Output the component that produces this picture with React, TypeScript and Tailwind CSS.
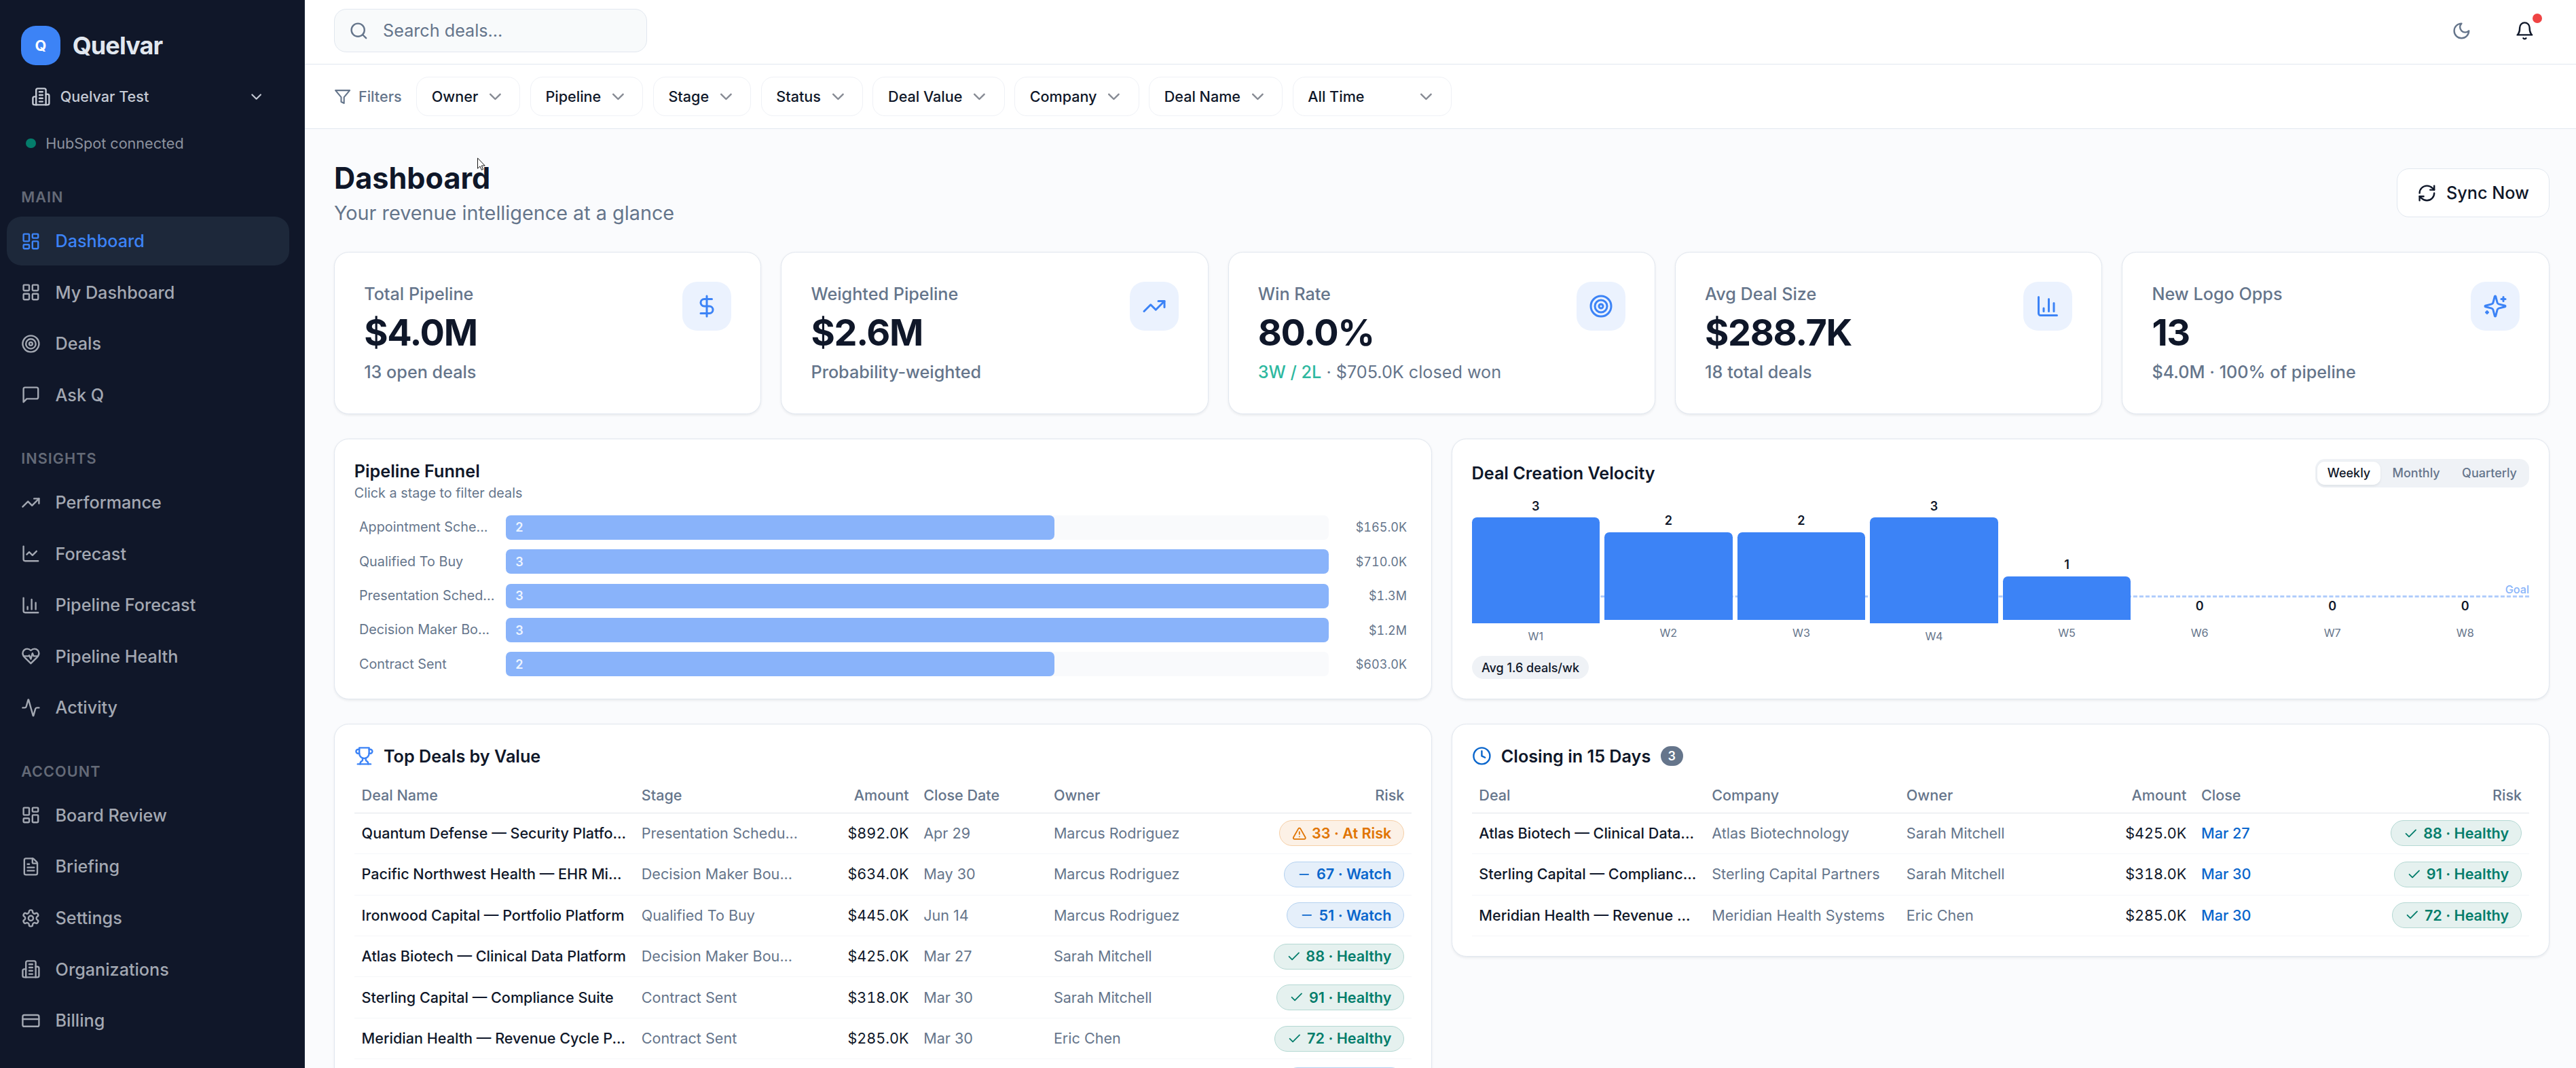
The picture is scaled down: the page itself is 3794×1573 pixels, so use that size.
import type { ReactNode } from "react";
import {
  Activity,
  ChartColumn,
  ChartLine,
  Check,
  ChevronDown,
  Clock,
  CreditCard,
  DollarSign,
  FileText,
  LayoutDashboard,
  LayoutGrid,
  Minus,
  RefreshCw,
  Search,
  Target,
  TrendingUp,
  TriangleAlert,
} from "lucide-react";

type IconProps = { size?: number; className?: string };
type IconType = (props: IconProps) => ReactNode;

function makeIcon(paths: string[]): IconType {
  return function Icon({ size = 16, className }: IconProps) {
    return (
      <svg
        width={size}
        height={size}
        viewBox="0 0 24 24"
        fill="none"
        stroke="currentColor"
        strokeWidth={2}
        strokeLinecap="round"
        strokeLinejoin="round"
        className={className}
      >
        {paths.map((d) => (
          <path key={d} d={d} />
        ))}
      </svg>
    );
  };
}

const Building = makeIcon([
  "M6 22V4a2 2 0 0 1 2-2h8a2 2 0 0 1 2 2v18Z",
  "M6 12H4a2 2 0 0 0-2 2v6a2 2 0 0 0 2 2h2",
  "M18 9h2a2 2 0 0 1 2 2v9a2 2 0 0 1-2 2h-2",
  "M10 6h4",
  "M10 10h4",
  "M10 14h4",
  "M10 18h4",
]);
const Message = makeIcon(["M21 15a2 2 0 0 1-2 2H7l-4 4V5a2 2 0 0 1 2-2h14a2 2 0 0 1 2 2z"]);
const HeartPulse = makeIcon([
  "M19 14c1.49-1.46 3-3.21 3-5.5A5.5 5.5 0 0 0 16.5 3c-1.76 0-3 .5-4.5 2-1.5-1.5-2.74-2-4.5-2A5.5 5.5 0 0 0 2 8.5c0 2.3 1.5 4.05 3 5.5l7 7Z",
  "M3.22 12H9.5l.5-1 2 4.5 2-7 1.5 3.5h5.27",
]);
const Gear = makeIcon([
  "M12.22 2h-.44a2 2 0 0 0-2 2v.18a2 2 0 0 1-1 1.73l-.43.25a2 2 0 0 1-2 0l-.15-.08a2 2 0 0 0-2.73.73l-.22.38a2 2 0 0 0 .73 2.73l.15.1a2 2 0 0 1 1 1.72v.51a2 2 0 0 1-1 1.74l-.15.09a2 2 0 0 0-.73 2.73l.22.38a2 2 0 0 0 2.73.73l.15-.08a2 2 0 0 1 2 0l.43.25a2 2 0 0 1 1 1.73V20a2 2 0 0 0 2 2h.44a2 2 0 0 0 2-2v-.18a2 2 0 0 1 1-1.73l.43-.25a2 2 0 0 1 2 0l.15.08a2 2 0 0 0 2.73-.73l.22-.39a2 2 0 0 0-.73-2.73l-.15-.08a2 2 0 0 1-1-1.74v-.5a2 2 0 0 1 1-1.74l.15-.09a2 2 0 0 0 .73-2.73l-.22-.38a2 2 0 0 0-2.73-.73l-.15.08a2 2 0 0 1-2 0l-.43-.25a2 2 0 0 1-1-1.73V4a2 2 0 0 0-2-2z",
  "M15 12a3 3 0 1 1-6 0 3 3 0 0 1 6 0Z",
]);
const Bell = makeIcon(["M6 8a6 6 0 0 1 12 0c0 7 3 9 3 9H3s3-2 3-9", "M10.3 21a1.94 1.94 0 0 0 3.4 0"]);
const Moon = makeIcon(["M12 3a6 6 0 0 0 9 9 9 9 0 1 1-9-9Z"]);
const Funnel = makeIcon(["M22 3H2l8 9.46V19l4 2v-8.54L22 3Z"]);
const Trophy = makeIcon([
  "M6 9H4.5a2.5 2.5 0 0 1 0-5H6",
  "M18 9h1.5a2.5 2.5 0 0 0 0-5H18",
  "M4 22h16",
  "M10 14.66V17c0 .55-.47.98-.97 1.21C7.85 18.75 7 20.24 7 22",
  "M14 14.66V17c0 .55.47.98.97 1.21C16.15 18.75 17 20.24 17 22",
  "M18 2H6v7a6 6 0 0 0 12 0V2Z",
]);
const Sparkles = makeIcon([
  "M9.937 15.5A2 2 0 0 0 8.5 14.063l-6.135-1.582a.5.5 0 0 1 0-.962L8.5 9.936A2 2 0 0 0 9.937 8.5l1.582-6.135a.5.5 0 0 1 .963 0L14.063 8.5A2 2 0 0 0 15.5 9.937l6.135 1.581a.5.5 0 0 1 0 .964L15.5 14.063a2 2 0 0 0-1.437 1.437l-1.582 6.135a.5.5 0 0 1-.963 0z",
  "M20 3v4",
  "M22 5h-4",
  "M4 17v2",
  "M5 18H3",
]);

const sections: { title: string; items: { icon: any; label: string; active?: boolean }[] }[] = [
  {
    title: "MAIN",
    items: [
      { icon: LayoutDashboard, label: "Dashboard", active: true },
      { icon: LayoutGrid, label: "My Dashboard" },
      { icon: Target, label: "Deals" },
      { icon: Message, label: "Ask Q" },
    ],
  },
  {
    title: "INSIGHTS",
    items: [
      { icon: TrendingUp, label: "Performance" },
      { icon: ChartLine, label: "Forecast" },
      { icon: ChartColumn, label: "Pipeline Forecast" },
      { icon: HeartPulse, label: "Pipeline Health" },
      { icon: Activity, label: "Activity" },
    ],
  },
  {
    title: "ACCOUNT",
    items: [
      { icon: LayoutDashboard, label: "Board Review" },
      { icon: FileText, label: "Briefing" },
      { icon: Gear, label: "Settings" },
      { icon: Building, label: "Organizations" },
      { icon: CreditCard, label: "Billing" },
    ],
  },
];

function Sidebar() {
  return (
    <aside className="w-[249.33px] shrink-0 overflow-hidden border-r border-[#1e293b] bg-[#101729] pt-[21.2px] pr-3 pl-[5.33px]">
      <div className="flex items-center gap-2.5 px-3">
        <div className="flex size-8 items-center justify-center rounded-xl bg-[#3c83f6] text-xs font-bold text-white">Q</div>
        <span className="text-xl font-bold tracking-tight text-[#e1e7ef]">Quelvar</span>
      </div>
      <div className="mx-3 mt-2 flex h-9 items-center gap-2 px-2 text-[#c5cad4]">
        <Building />
        <span className="flex-1 text-xs font-medium">Quelvar Test</span>
        <ChevronDown size={14} />
      </div>
      <div className="mt-3 flex h-4 items-center gap-2 px-4">
        <span className="size-2 rounded-full bg-[#047d6b]" />
        <span className="text-xs text-[#8c929e]">HubSpot connected</span>
      </div>
      <nav className="mt-7 flex flex-col gap-6">
        {sections.map((s) => (
          <div key={s.title}>
            <div className="mb-2 h-4 px-3 text-xs font-semibold tracking-wider text-[#646a77]">{s.title}</div>
            <div className="flex flex-col gap-0.5">
              {s.items.map(({ icon: Icon, label, active }) => (
                <div
                  key={label}
                  className={
                    active
                      ? "flex h-10 items-center gap-3 rounded-xl bg-[#1d283a] px-3 text-sm font-medium text-[#3c83f6]"
                      : "flex h-10 items-center gap-3 rounded-xl px-3 text-sm font-medium text-[#a3a8b2]"
                  }
                >
                  <Icon size={16} />
                  {label}
                </div>
              ))}
            </div>
          </div>
        ))}
      </nav>
    </aside>
  );
}

function Header() {
  return (
    <header className="h-[53px] border-b border-[#e1e7ef] bg-white pt-[7px] pr-[21.8px] pl-6">
      <div className="flex h-9 items-center justify-between">
        <div className="flex h-9 w-64 items-center gap-3 rounded-[10px] border border-[#e1e7ef] bg-[#f8fafb] pl-[11.5px] text-sm text-[#65758b]">
          <Search size={16} />
          <span>Search deals...</span>
        </div>
        <div className="flex items-center gap-3">
          <div className="flex size-10 items-center justify-center text-[#65758b]">
            <Moon />
          </div>
          <div className="relative flex size-10 items-center justify-center text-[#0f1729]">
            <Bell />
            <span className="absolute top-1.5 right-1.5 size-2 rounded-full bg-[#ef4343]" />
          </div>
        </div>
      </div>
    </header>
  );
}

function FilterBar() {
  return (
    <div className="flex items-center gap-2 border-b border-[#e1e7ef] bg-white py-2.5 pl-6 text-xs font-medium text-[#0f1729]">
      <div className="mr-1 flex items-center gap-1.5 text-[#65758b]">
        <Funnel size={14} />
        Filters
      </div>
      {["Owner", "Pipeline", "Stage", "Status", "Deal Value", "Company", "Deal Name"].map((f) => (
        <div key={f} className="flex h-8 items-center gap-1.5 rounded-[10px] border border-[#eff1f6] bg-white px-3">
          {f}
          <ChevronDown size={16} className="opacity-50" />
        </div>
      ))}
      <div className="flex h-8 w-[130px] items-center justify-between rounded-[10px] border border-[#eff1f6] bg-white px-3">
        All Time
        <ChevronDown size={16} className="opacity-50" />
      </div>
    </div>
  );
}

const stats: { label: string; value: string; sub: ReactNode; icon: any }[] = [
  { label: "Total Pipeline", value: "$4.0M", sub: "13 open deals", icon: DollarSign },
  { label: "Weighted Pipeline", value: "$2.6M", sub: "Probability-weighted", icon: TrendingUp },
  {
    label: "Win Rate",
    value: "80.0%",
    sub: (
      <>
        <span className="text-[#2eb8a0]">3W / 2L</span>
        <span className="font-normal"> · $705.0K closed won</span>
      </>
    ),
    icon: Target,
  },
  { label: "Avg Deal Size", value: "$288.7K", sub: "18 total deals", icon: ChartColumn },
  { label: "New Logo Opps", value: "13", sub: "$4.0M · 100% of pipeline", icon: Sparkles },
];

function StatCards() {
  return (
    <div className="grid grid-cols-5 gap-4">
      {stats.map(({ label, value, sub, icon: Icon }) => (
        <div
          key={label}
          className="flex items-start justify-between rounded-xl border border-[#e1e7ef] bg-white p-6 shadow-[0_1px_2px_rgba(15,23,42,0.07)]"
        >
          <div className="text-sm font-medium text-[#65758b]">
            <p>{label}</p>
            <p className="mt-1 text-3xl font-bold tracking-tight text-[#0f1729]">{value}</p>
            <p className="mt-1">{sub}</p>
          </div>
          <div className="flex size-10 items-center justify-center rounded-xl bg-[#ebf2fe] text-[#3c83f6]">
            <Icon size={20} />
          </div>
        </div>
      ))}
    </div>
  );
}

const stages = [
  { name: "Appointment Sche...", count: 2, amount: "$165.0K" },
  { name: "Qualified To Buy", count: 3, amount: "$710.0K" },
  { name: "Presentation Sched...", count: 3, amount: "$1.3M" },
  { name: "Decision Maker Bo...", count: 3, amount: "$1.2M" },
  { name: "Contract Sent", count: 2, amount: "$603.0K" },
];

function PipelineFunnel() {
  return (
    <div className="rounded-xl border border-[#e1e7ef] bg-white p-4 shadow-[0_1px_2px_rgba(15,23,42,0.07)]">
      <h3 className="text-sm font-semibold">Pipeline Funnel</h3>
      <p className="text-[11px] leading-4 text-[#65758b]">Click a stage to filter deals</p>
      <div className="mt-2 flex flex-col gap-1">
        {stages.map((s) => (
          <div key={s.name} className="flex h-6 items-center gap-2 px-1 text-[11px] text-[#65758b]">
            <span className="w-28 whitespace-nowrap">{s.name}</span>
            <div className="h-5 flex-1 rounded bg-[#f9fafc]">
              <div
                className="flex h-full items-center rounded bg-[#89b3fa] px-2 text-[10px] font-semibold text-white/85"
                style={{ width: `${(s.count / 3) * 100}%` }}
              >
                {s.count}
              </div>
            </div>
            <span className="w-14 text-right text-[10px] tabular-nums">{s.amount}</span>
          </div>
        ))}
      </div>
    </div>
  );
}

const weeks = [
  { label: "W1", count: 3, height: 86.4 },
  { label: "W2", count: 2, height: 71.8 },
  { label: "W3", count: 2, height: 71.8 },
  { label: "W4", count: 3, height: 86.4 },
  { label: "W5", count: 1, height: 35.7 },
  { label: "W6", count: 0, height: 2 },
  { label: "W7", count: 0, height: 2 },
  { label: "W8", count: 0, height: 2 },
];

function Velocity() {
  return (
    <div className="rounded-xl border border-[#e1e7ef] bg-white p-4 shadow-[0_1px_2px_rgba(15,23,42,0.07)]">
      <div className="flex items-center justify-between">
        <h3 className="text-sm font-semibold">Deal Creation Velocity</h3>
        <div className="flex gap-0.5 rounded-lg bg-[#eff2f6] p-0.5 text-[10px] leading-[15px] font-medium text-[#65758b]">
          <span className="rounded-md bg-white px-2 py-0.5 text-[#0f1729] shadow-[0_1px_2px_rgba(15,23,42,0.07)]">
            Weekly
          </span>
          <span className="px-2 py-0.5">Monthly</span>
          <span className="px-2 py-0.5">Quarterly</span>
        </div>
      </div>
      <div className="relative mt-2 flex h-[118px] items-end gap-1">
        <div className="absolute inset-x-0 top-[80.8px] border-t-2 border-dashed border-[#b1cdfb]">
          <span className="absolute right-0 bottom-0 text-[9px] leading-[13px] font-medium text-[#8ab5fa]">Goal</span>
        </div>
        {weeks.map((w) => (
          <div
            key={w.label}
            className={
              w.count === 3
                ? "relative -mb-[2.8px] flex flex-1 flex-col items-center"
                : "relative flex flex-1 flex-col items-center"
            }
          >
            <span className="mb-0.5 text-[10px] leading-[15px] font-semibold">{w.count}</span>
            <div
              className={w.count ? "w-full rounded-t bg-[#3c83f6]" : "w-full"}
              style={{ height: w.height }}
            />
            <span className="mt-1 text-[9px] leading-[13.5px] text-[#65758b]">{w.label}</span>
          </div>
        ))}
      </div>
      <div className="mt-3 flex">
        <span className="rounded-full bg-[#eff2f6] px-2 py-0.5 text-[10px] leading-[15px] font-medium">
          Avg 1.6 deals/wk
        </span>
      </div>
    </div>
  );
}

const riskStyles = {
  "At Risk": { icon: TriangleAlert, cls: "border-[#f6cfa6] bg-[#fcf1e6] text-[#e07400]" },
  Watch: { icon: Minus, cls: "border-[#b3d1f0] bg-[#e5effa] text-[#0a66cc]" },
  Healthy: { icon: Check, cls: "border-[#b4d8d3] bg-[#e5f1ef] text-[#047d6b]" },
};
type Risk = keyof typeof riskStyles;

function RiskBadge({ score, risk }: { score: number; risk: Risk }) {
  const { icon: Icon, cls } = riskStyles[risk];
  return (
    <span
      className={`inline-flex h-[21px] items-center gap-1 rounded-full border px-2.5 text-xs font-semibold ${cls}`}
    >
      <Icon size={12} />
      {score} · {risk}
    </span>
  );
}

const topDeals: [string, string, string, string, string, number, Risk][] = [
  ["Quantum Defense — Security Platfo...", "Presentation Schedu...", "$892.0K", "Apr 29", "Marcus Rodriguez", 33, "At Risk"],
  ["Pacific Northwest Health — EHR Mi...", "Decision Maker Bou...", "$634.0K", "May 30", "Marcus Rodriguez", 67, "Watch"],
  ["Ironwood Capital — Portfolio Platform", "Qualified To Buy", "$445.0K", "Jun 14", "Marcus Rodriguez", 51, "Watch"],
  ["Atlas Biotech — Clinical Data Platform", "Decision Maker Bou...", "$425.0K", "Mar 27", "Sarah Mitchell", 88, "Healthy"],
  ["Sterling Capital — Compliance Suite", "Contract Sent", "$318.0K", "Mar 30", "Sarah Mitchell", 91, "Healthy"],
  ["Meridian Health — Revenue Cycle P...", "Contract Sent", "$285.0K", "Mar 30", "Eric Chen", 72, "Healthy"],
];

function TopDeals() {
  return (
    <div className="h-[320px] rounded-xl border border-[#e1e7ef] bg-white p-4 shadow-[0_1px_2px_rgba(15,23,42,0.07)]">
      <h3 className="flex items-center gap-2 text-sm font-semibold">
        <Trophy className="text-[#3c83f6]" />
        Top Deals by Value
      </h3>
      <div className="mt-2 text-xs whitespace-nowrap text-[#65758b]">
        <div className="grid h-[28.6px] grid-cols-[229px_130px_100.8px_106.5px_140px_1fr] items-center border-b border-[#e1e5ea] font-medium *:px-1.5">
          <span>Deal Name</span>
          <span>Stage</span>
          <span className="text-right">Amount</span>
          <span>Close Date</span>
          <span>Owner</span>
          <span className="text-right">Risk</span>
        </div>
        {topDeals.map(([name, stage, amount, date, owner, score, risk]) => (
          <div
            key={name}
            className="grid h-[33.6px] grid-cols-[229px_130px_100.8px_106.5px_140px_1fr] items-center border-b border-[#f5f7f9]"
          >
            <span className="px-1.5 font-medium text-[#0f1729]">{name}</span>
            <span className="px-1.5">{stage}</span>
            <span className="px-1.5 text-right text-[#0f1729] tabular-nums">{amount}</span>
            <span className="px-1.5">{date}</span>
            <span className="px-1.5">{owner}</span>
            <div className="flex justify-end px-1.5">
              <RiskBadge score={score} risk={risk} />
            </div>
          </div>
        ))}
        <div className="flex h-[33.6px] items-center justify-end px-1.5">
          <span className="h-[21px] w-[98px] rounded-full border border-[#b3d1f0] bg-[#e5effa]" />
        </div>
      </div>
    </div>
  );
}

const closing: [string, string, string, string, string, number][] = [
  ["Atlas Biotech — Clinical Data...", "Atlas Biotechnology", "Sarah Mitchell", "$425.0K", "Mar 27", 88],
  ["Sterling Capital — Complianc...", "Sterling Capital Partners", "Sarah Mitchell", "$318.0K", "Mar 30", 91],
  ["Meridian Health — Revenue ...", "Meridian Health Systems", "Eric Chen", "$285.0K", "Mar 30", 72],
];

function ClosingSoon() {
  return (
    <div className="self-start rounded-xl border border-[#e1e7ef] bg-white p-4 shadow-[0_1px_2px_rgba(15,23,42,0.07)]">
      <h3 className="flex items-center gap-2 text-sm font-semibold">
        <Clock size={16} className="text-[#0a66cc]" />
        Closing in 15 Days
        <span className="flex h-4 items-center rounded-full bg-[#65758b] px-1.5 text-[10px] text-white">3</span>
      </h3>
      <div className="mt-2 text-xs whitespace-nowrap text-[#65758b]">
        <div className="grid h-[28.6px] grid-cols-[190.5px_159.2px_120px_121.2px_100px_1fr] items-center border-b border-[#e1e5ea] font-medium *:px-1.5">
          <span>Deal</span>
          <span>Company</span>
          <span>Owner</span>
          <span className="text-right">Amount</span>
          <span>Close</span>
          <span className="text-right">Risk</span>
        </div>
        {closing.map(([name, company, owner, amount, date, score]) => (
          <div
            key={name}
            className="grid h-[33.6px] grid-cols-[190.5px_159.2px_120px_121.2px_100px_1fr] items-center border-b border-[#f5f7f9]"
          >
            <span className="px-1.5 font-medium text-[#0f1729]">{name}</span>
            <span className="px-1.5">{company}</span>
            <span className="px-1.5">{owner}</span>
            <span className="px-1.5 text-right text-[#0f1729] tabular-nums">{amount}</span>
            <span className="px-1.5 font-medium text-[#0a66cc]">{date}</span>
            <div className="flex justify-end px-1.5">
              <RiskBadge score={score} risk="Healthy" />
            </div>
          </div>
        ))}
      </div>
    </div>
  );
}

export default function App() {
  return (
    <div className="relative flex h-[873.8px] overflow-hidden bg-[#fafbfd] font-[Inter,sans-serif] text-[#0f1729] [zoom:1.8]">
      <Sidebar />
      <div className="min-w-0 flex-1">
        <Header />
        <FilterBar />
        <main className="flex flex-col gap-5 pt-[24.5px] pr-[21.8px] pl-6">
          <div className="flex items-center justify-between">
            <div>
              <h1 className="text-2xl font-bold">Dashboard</h1>
              <p className="text-base text-[#65758b]">Your revenue intelligence at a glance</p>
            </div>
            <button className="flex h-10 items-center gap-2 rounded-[10px] border border-[#e1e7ef] bg-white px-4 text-sm font-medium">
              <RefreshCw size={16} />
              Sync Now
            </button>
          </div>
          <StatCards />
          <div className="grid grid-cols-2 gap-4">
            <PipelineFunnel />
            <Velocity />
          </div>
          <div className="grid grid-cols-2 gap-4">
            <TopDeals />
            <ClosingSoon />
          </div>
        </main>
      </div>
      <svg width="6.67" height="10.56" viewBox="0 0 12 19" className="absolute top-[128.8px] left-[390.4px]">
        <path d="M0.5 0.8V16.2L4 12.9L6.4 18.3L8.6 17.3L6.3 12H11.2Z" fill="#fff" stroke="#000" strokeWidth="0.9" />
      </svg>
    </div>
  );
}
